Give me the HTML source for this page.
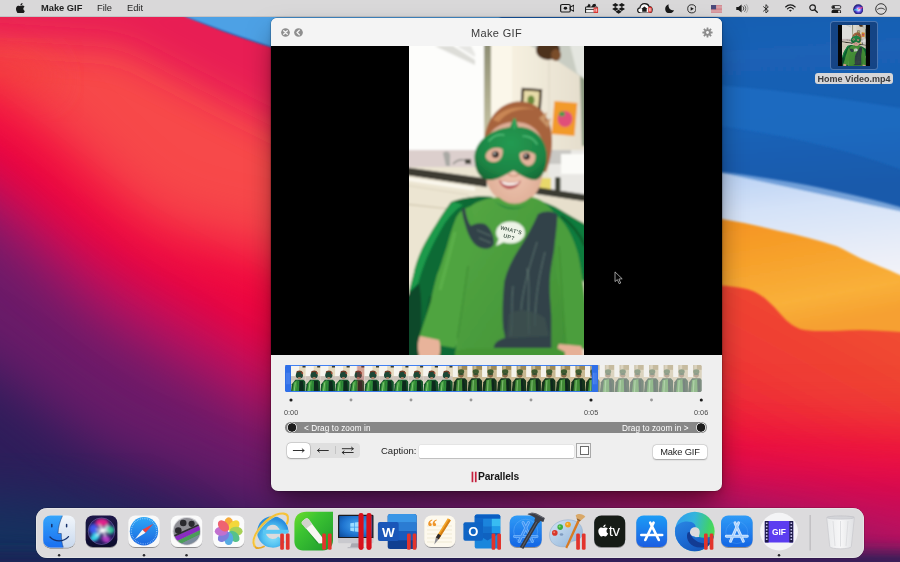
<!DOCTYPE html>
<html lang="en">
<head>
<meta charset="utf-8">
<title>Make GIF</title>
<style>
*{box-sizing:border-box;margin:0;padding:0}
html,body{width:900px;height:562px;overflow:hidden;background:#f2414a}
body{position:relative;font-family:"Liberation Sans",sans-serif;color:#222}
#wall{position:absolute;left:0;top:0;width:900px;height:562px}
#menubar{position:absolute;left:0;top:0;width:900px;height:17px;background:#d9d8d9;border-bottom:1px solid #c3c2c4}
#menubar .mi{position:absolute;top:0;height:17px;line-height:17px;font-size:9.300px;color:#1e1e1e;white-space:nowrap}
#menubar svg{position:absolute}
#win{position:absolute;left:271px;top:18px;width:451px;height:473px;background:#efefef;border-radius:6px 6px 7px 7px;overflow:hidden;box-shadow:0 0 0 0.5px rgba(0,0,0,.28),0 14px 28px -5px rgba(0,0,0,.55),0 1px 5px rgba(0,0,0,.14)}
#titlebar{position:absolute;left:0;top:0;width:451px;height:28px;background:#f4f4f4}
#title{position:absolute;left:0;top:0.500px;width:451px;height:28px;line-height:29px;will-change:transform;text-align:center;font-size:11px;letter-spacing:0.350px;color:#3a3a3a}
#video{position:absolute;left:0;top:27.500px;width:451px;height:309.500px;background:#000}
#dock{position:absolute;left:36px;top:508px;width:828px;height:50px;background:#dcdbdd;border-radius:11px;box-shadow:0 0 0 0.5px rgba(255,255,255,.55) inset,0 0 0 0.5px rgba(0,0,0,.25)}

.tl{position:absolute;top:389.900px;font-size:7.300px;line-height:10px;color:#4a4a4a;white-space:nowrap}
#zbar{position:absolute;left:14px;top:404px;width:421.500px;height:11px;border-radius:5.500px;background:#878787}
#zbar .zk{position:absolute;top:0.300px;width:10.400px;height:10.400px;border-radius:50%;background:radial-gradient(circle closest-side,#1c1c1c 0,#1c1c1c 3.900px,#d6d6d6 4.400px,#d6d6d6 4.900px,rgba(214,214,214,0) 5.200px)}
#zbar .zt{position:absolute;top:0.600px;height:11px;line-height:11.500px;font-size:8.200px;color:#fff;white-space:nowrap;letter-spacing:0.100px}
#seg{position:absolute;left:15.500px;top:424.500px;width:73px;height:15px;border-radius:4px;background:#dfdfdf}
#seg .sel{position:absolute;left:0;top:0;width:23.300px;height:15px;border-radius:4px;background:#fff;box-shadow:0 0 0 0.500px rgba(0,0,0,.18),0 0.500px 1.500px rgba(0,0,0,.25)}
#seg .dv{position:absolute;left:48.700px;top:3.500px;width:0.700px;height:8px;background:#c4c4c4}
#cap{position:absolute;left:109.500px;top:427px;height:12px;line-height:12px;font-size:9.500px;color:#222;white-space:nowrap}
#capin{position:absolute;left:148px;top:426.500px;width:155px;height:13.300px;background:#fff;border-radius:1.500px;box-shadow:0 0 0 0.500px rgba(0,0,0,.08),0 0.700px 0 rgba(0,0,0,.22)}
#swatch{position:absolute;left:305.300px;top:425px;width:15px;height:15px;background:#f6f6f6;border:0.800px solid #a9a9a9}
#swatch span{position:absolute;left:2.300px;top:2.300px;width:9px;height:9px;background:#fff;border:0.900px solid #6a6a6a}
#mkbtn{position:absolute;left:381.500px;top:427.300px;width:54px;height:13.700px;border-radius:3.500px;background:#fff;box-shadow:0 0 0 0.500px rgba(0,0,0,.12),0 0.700px 1.500px rgba(0,0,0,.28);text-align:center}
#mkt{position:absolute;left:0;top:0;width:54px;height:13.700px;font-size:9.300px;line-height:14px;color:#222;white-space:nowrap;letter-spacing:-0.150px}
#plogo{position:absolute;left:207.300px;top:452px;height:13px;line-height:13px;font-size:10.300px;font-weight:bold;letter-spacing:-0.150px;color:#161616;white-space:nowrap}

#dsel{position:absolute;left:829.600px;top:21.400px;width:48.700px;height:48.400px;border-radius:3.500px;background:rgba(20,52,104,.62);border:0.800px solid rgba(120,160,215,.55)}
#dthumb{position:absolute;left:837.700px;top:24.700px;width:32.100px;height:41.300px;background:#050505;overflow:hidden}
#dlabel{position:absolute;left:814.700px;top:72.700px;width:78px;height:11.800px;border-radius:3px;background:#d6d6d8;text-align:center}
#dlt{position:absolute;left:0;top:0;width:78px;height:11.800px;line-height:12px;font-size:9px;font-weight:bold;color:#3a3a3c;white-space:nowrap;letter-spacing:0}
.mi,.tl,.zt,#cap,#mkt,#plogo,#dlt{will-change:transform}
</style>
</head>
<body>
<svg id="wall" viewBox="0 0 900 562">
<!--WALL-START-->
<defs>
<filter id="b30" x="-20%" y="-20%" width="140%" height="140%" color-interpolation-filters="sRGB"><feGaussianBlur stdDeviation="20"/><feGaussianBlur stdDeviation="20"/></filter>
<filter id="b18" x="-20%" y="-20%" width="140%" height="140%"><feGaussianBlur stdDeviation="18"/></filter>
<filter id="b8" x="-20%" y="-20%" width="140%" height="140%"><feGaussianBlur stdDeviation="8"/></filter>
<filter id="b1" x="-5%" y="-5%" width="110%" height="110%"><feGaussianBlur stdDeviation="0.8"/></filter>
<linearGradient id="gBlue" x1="0" y1="0" x2="0.25" y2="1"><stop offset="0" stop-color="#1459ab"/><stop offset="0.42" stop-color="#1a62b6"/><stop offset="0.75" stop-color="#195fb2"/><stop offset="1" stop-color="#154f9c"/></linearGradient>
<linearGradient id="gLight" x1="0" y1="0" x2="0.2" y2="1"><stop offset="0" stop-color="#a9c8f2"/><stop offset="0.45" stop-color="#d4e2f8"/><stop offset="1" stop-color="#f3f3f8"/></linearGradient>
<linearGradient id="gOrange" x1="0" y1="0" x2="0.350" y2="1"><stop offset="0" stop-color="#f38d1e"/><stop offset="0.450" stop-color="#f7a02a"/><stop offset="0.800" stop-color="#f9b03a"/><stop offset="1" stop-color="#f6a030"/></linearGradient>
<linearGradient id="gRedR" x1="1" y1="0" x2="0.300" y2="1"><stop offset="0" stop-color="#f3622e"/><stop offset="0.350" stop-color="#f04a30"/><stop offset="0.700" stop-color="#ef3a35"/><stop offset="1" stop-color="#f0243a"/></linearGradient>
</defs>
<rect width="900" height="562" fill="#f7494a"/>
<!-- rose streak top-left -->
<path d="M-60,-20 L320,-20 L320,150 L230,105 L120,48 L-60,36Z" fill="#e81c54" filter="url(#b18)" opacity="0.950"/>
<path d="M-60,50 L40,50 L60,90 L-60,110Z" fill="#f4443e" filter="url(#b18)" opacity="0.700"/>
<!-- right side red-orange -->
<path d="M700,270 L950,270 L950,460 L700,460Z" fill="url(#gRedR)" filter="url(#b8)"/>
<!-- red band -->
<path d="M-120,40 L0,98 L50,132 L100,182 L150,224 L200,240 L271,254 L520,410 L740,438 L1000,440 L1000,800 L-120,800Z" fill="#f0043e" filter="url(#b30)"/>
<!-- magenta -->
<path d="M-120,100 L0,185 L100,262 L271,358 L520,455 L1000,498 L1000,800 L-120,800Z" fill="#bd1160" filter="url(#b30)"/>
<!-- purple -->
<path d="M-120,140 L0,228 L100,318 L271,420 L560,490 L800,535 L1000,600 L1000,800 L-120,800Z" fill="#6a1b69" filter="url(#b30)"/>
<!-- indigo -->
<path d="M-120,300 L0,375 L100,450 L271,515 L500,560 L700,800 L-120,800Z" fill="#2d1d5a" filter="url(#b30)"/>
<ellipse cx="-30" cy="600" rx="230" ry="105" fill="#14325f" filter="url(#b30)"/>
<path d="M-80,552 L980,552 L980,700 L-80,700Z" fill="#1b2454" filter="url(#b8)" opacity="0.85"/>
<!-- orange band -->
<path d="M700,200 L950,240 L950,332 L900,332 C886,331 872,330 860,330 C846,330.500 832,331 820,331 C812,331 806,330.500 800,329 C794,326.500 790,323.500 786,320 C780,314 776,308 770,303 C764,297 758,292.500 750,290 C742,287.500 732,286 700,284Z" fill="url(#gOrange)" filter="url(#b1)"/>
<!-- light band -->
<path d="M700,150 L950,190 L950,292 L900,275 C893,272 887,269 880,266.500 C873,263.500 867,261 860,258 C852,254 845,250 837,246.300 C818,240 798,235 778,230.700 C760,226 740,222 722,219 L700,216Z" fill="url(#gLight)" filter="url(#b1)"/>
<!-- blue -->
<path d="M150,-5 L188,17 C215,29 245,39 271,47 L722,172 C740,174 760,177 778,180 C798,183 818,187 837,191.500 C858,196 880,201 900,207 L950,222 L950,-5Z" fill="url(#gBlue)" filter="url(#b1)"/>
<path d="M150,-5 L186.500,17 C215,28 245,38 271,46.500 L500,110 L500,-5Z" fill="#4ea1e5" filter="url(#b1)"/>
<path d="M700,84 C760,88 830,96 950,116 L950,190 C860,150 780,134 700,124Z" fill="#2473cb" opacity="0.55" filter="url(#b1)"/>
<path d="M700,124 C780,134 860,150 950,190 L950,222 L700,168Z" fill="#1b65bb" opacity="0.5" filter="url(#b1)"/>
<!--WALL-END-->
</svg>
<div id="menubar">
<!--MENU-START-->
<svg style="left:14.600px;top:2.600px" width="10.800" height="10.800" viewBox="0 0 24 24"><path fill="#1a1a1a" d="M12.152 6.896c-.948 0-2.415-1.078-3.960-1.040-2.040.027-3.910 1.183-4.961 3.014-2.117 3.675-.546 9.103 1.519 12.090 1.013 1.454 2.208 3.090 3.792 3.039 1.520-.065 2.090-.987 3.935-.987 1.831 0 2.350.987 3.960.948 1.637-.026 2.676-1.480 3.676-2.948 1.156-1.688 1.636-3.325 1.662-3.415-.039-.013-3.182-1.221-3.220-4.857-.026-3.040 2.480-4.494 2.597-4.559-1.429-2.090-3.623-2.324-4.390-2.376-2-.156-3.675 1.090-4.610 1.090zM15.530 3.830c.843-1.012 1.400-2.427 1.245-3.830-1.207.052-2.662.805-3.532 1.818-.780.896-1.454 2.338-1.273 3.714 1.338.104 2.715-.688 3.559-1.701"/></svg>
<span class="mi" id="m1" style="left:40.500px;font-weight:bold">Make GIF</span>
<span class="mi" id="m2" style="left:97px">File</span>
<span class="mi" id="m3" style="left:126.500px">Edit</span>
<!-- camera -->
<svg style="left:559.700px;top:4px" width="14.500" height="8.600" viewBox="0 0 16 11" preserveAspectRatio="none"><rect x="0.700" y="0.700" width="10.600" height="9.600" rx="1.800" fill="none" stroke="#1a1a1a" stroke-width="1.300"/><path d="M11.300,4 L15.300,1.600 L15.300,9.400 L11.300,7Z" fill="none" stroke="#1a1a1a" stroke-width="1.200" stroke-linejoin="round"/><circle cx="6" cy="5.500" r="1.900" fill="#1a1a1a"/></svg>
<!-- toolbox -->
<svg style="left:585.400px;top:2.600px" width="14" height="10.400" viewBox="0 0 15 13" preserveAspectRatio="none"><rect x="0.600" y="5" width="12.500" height="7.400" rx="0.800" fill="#f4f4f4" stroke="#1a1a1a" stroke-width="1.100"/><path d="M1,8 H13" stroke="#1a1a1a" stroke-width="1"/><path d="M2,5 L4,1 L6,2.500 L5,5Z M7,5 L8.500,1.500 L11,0.800 L12,3 L10,5Z" fill="#1a1a1a"/><rect x="9.200" y="5.500" width="4.800" height="7" rx="0.800" fill="#e0322e"/><path d="M10.700,7 V11 M12.500,7 V11" stroke="#fff" stroke-width="0.900"/></svg>
<!-- dropbox -->
<svg style="left:612.300px;top:2.800px" width="13.200" height="11" viewBox="0 0 14 12"><path fill="#1a1a1a" d="M3.500,0 L7,2.200 L3.500,4.400 L0,2.200Z M10.500,0 L14,2.200 L10.500,4.400 L7,2.200Z M3.500,4.400 L7,6.600 L3.500,8.800 L0,6.600Z M10.500,4.400 L14,6.600 L10.500,8.800 L7,6.600Z M3.500,9.600 L7,7.400 L10.500,9.600 L7,11.800Z"/></svg>
<!-- cloud home -->
<svg style="left:637.200px;top:2.900px" width="15.800" height="10.600" viewBox="0 0 17 13" preserveAspectRatio="none"><path d="M4,12.200 C1.800,12.200 0.700,10.600 0.700,9 C0.700,7.400 1.800,6.200 3.200,6 C3.200,3 5.400,0.800 8.200,0.800 C10.600,0.800 12.400,2.300 13,4.400 C14.900,4.600 16.300,6.200 16.300,8.200 C16.300,10.500 14.600,12.200 12.500,12.200Z" fill="#fafafa" stroke="#1a1a1a" stroke-width="1.300"/><path d="M4.600,7.400 L8,4.200 L11.400,7.400 L10.400,7.400 L10.400,10.600 L5.600,10.600 L5.600,7.400Z" fill="#1a1a1a"/><rect x="12" y="4.600" width="4" height="7.400" rx="1.200" fill="#e0322e"/><path d="M13.300,6.200 V10.400 M14.800,6.200 V10.400" stroke="#fff" stroke-width="0.800"/></svg>
<!-- moon -->
<svg style="left:664.700px;top:3.900px" width="9.600" height="9.600" viewBox="0 0 11 11"><path d="M4.200,0.300 C3.400,3.800 5.800,7.400 10.300,7.200 C9.300,9.400 7.400,10.700 5.200,10.700 C2.300,10.700 0.200,8.500 0.200,5.700 C0.200,3.100 1.900,0.900 4.200,0.300Z" fill="#1a1a1a"/></svg>
<!-- play circle -->
<svg style="left:686.900px;top:4.300px" width="9.600" height="9.600" viewBox="0 0 11 11"><circle cx="5.500" cy="5.500" r="4.700" fill="none" stroke="#1a1a1a" stroke-width="1"/><path d="M4.200,3.300 L7.800,5.500 L4.200,7.700Z" fill="#1a1a1a"/></svg>
<!-- flag -->
<svg style="left:710.800px;top:4.600px" width="11.300" height="8.500" viewBox="0 0 12 9"><rect width="12" height="9" rx="1" fill="#e8dede"/><path d="M0,0.700 H12 M0,2.100 H12 M0,3.500 H12 M0,4.900 H12 M0,6.300 H12 M0,7.700 H12" stroke="#c8505c" stroke-width="0.750"/><rect width="5.400" height="4.600" fill="#4a4a7c"/></svg>
<!-- speaker -->
<svg style="left:736.200px;top:4.300px" width="12.700" height="9" viewBox="0 0 14 11" preserveAspectRatio="none"><path d="M0.300,3.600 H2.600 L6.200,0.600 V10.400 L2.600,7.400 H0.300Z" fill="#1a1a1a"/><path d="M7.800,3.300 C8.800,4.500 8.800,6.500 7.800,7.700" fill="none" stroke="#1a1a1a" stroke-width="1" stroke-linecap="round"/><path d="M9.600,1.900 C11.300,3.900 11.300,7.100 9.600,9.100" fill="none" stroke="#555" stroke-width="1" stroke-linecap="round"/><path d="M11.400,0.600 C13.700,3.400 13.700,7.600 11.400,10.400" fill="none" stroke="#999" stroke-width="1" stroke-linecap="round"/></svg>
<!-- bluetooth -->
<svg style="left:763px;top:3.700px" width="6.200" height="9.800" viewBox="0 0 7 12" preserveAspectRatio="none"><path d="M0.600,3.300 L6,8.400 L3.300,11.200 V0.800 L6,3.600 L0.600,8.700" fill="none" stroke="#1a1a1a" stroke-width="1" stroke-linejoin="round" stroke-linecap="round"/></svg>
<!-- wifi -->
<svg style="left:785.300px;top:4.200px" width="10.800" height="8.200" viewBox="0 0 13 10"><path d="M0.700,3.600 C4,0.400 9,0.400 12.300,3.600" fill="none" stroke="#1a1a1a" stroke-width="1.500" stroke-linecap="round"/><path d="M2.900,5.900 C5,3.900 8,3.900 10.100,5.900" fill="none" stroke="#1a1a1a" stroke-width="1.500" stroke-linecap="round"/><path d="M6.500,9.600 L4.700,7.700 C5.700,6.800 7.300,6.800 8.300,7.700Z" fill="#1a1a1a"/></svg>
<!-- search -->
<svg style="left:809.200px;top:4.300px" width="9" height="9" viewBox="0 0 10 10"><circle cx="4" cy="4" r="3.100" fill="none" stroke="#1a1a1a" stroke-width="1.300"/><path d="M6.300,6.300 L9.200,9.200" stroke="#1a1a1a" stroke-width="1.500" stroke-linecap="round"/></svg>
<!-- control center -->
<svg style="left:831.400px;top:4.700px" width="10.600" height="8.800" viewBox="0 0 12 10"><rect x="0.900" y="0.600" width="10.200" height="3.700" rx="1.850" fill="none" stroke="#1a1a1a" stroke-width="0.900"/><circle cx="2.900" cy="2.450" r="1.500" fill="#1a1a1a"/><rect x="0.500" y="5.500" width="11" height="4.200" rx="2.100" fill="#1a1a1a"/><circle cx="9.200" cy="7.600" r="1.300" fill="#d9d8d9"/></svg>
<!-- siri -->
<svg style="left:852.700px;top:3.700px" width="10.600" height="10.600" viewBox="0 0 11 11"><defs><radialGradient id="siriM" cx="0.520" cy="0.520" r="0.560"><stop offset="0" stop-color="#ffffff"/><stop offset="0.220" stop-color="#d9d0ff"/><stop offset="0.450" stop-color="#6a5ae8"/><stop offset="0.750" stop-color="#2c2490"/><stop offset="1" stop-color="#1c1c58"/></radialGradient></defs><circle cx="5.500" cy="5.500" r="5.300" fill="url(#siriM)"/><path d="M1.300,6.800 C2.500,4.500 4,7.500 5.500,5.500" stroke="#3ad8f0" stroke-width="1.300" fill="none" opacity="0.750"/><path d="M5.500,5.500 C7,3.300 8.500,5.500 9.800,3.300" stroke="#ff4a8a" stroke-width="1.300" fill="none" opacity="0.800"/></svg>
<!-- user circle -->
<svg style="left:875px;top:2.500px" width="12" height="12" viewBox="0 0 12 12"><circle cx="6" cy="6" r="5.300" fill="none" stroke="#1a1a1a" stroke-width="0.850"/><path d="M2.500,6.300 C4.300,4.700 7.700,4.700 9.500,6.300" fill="none" stroke="#1a1a1a" stroke-width="0.750" stroke-linecap="round"/></svg>
<!--MENU-END-->
</div>
<!--DESK-START-->
<div id="dsel"></div>
<div id="dthumb"><svg style="position:absolute;left:4.300px;top:0" width="23.800" height="41.300" viewBox="0 0 175 309" preserveAspectRatio="none"><use href="#photoG"/><rect width="175" height="309" fill="#000" opacity="0.120"/></svg></div>
<div id="dlabel"><span id="dlt">Home Video.mp4</span></div>
<!--DESK-END-->
<div id="win">
<div id="titlebar"></div>
<div id="title">Make GIF</div>
<div id="video"><!--VIDEO-START-->
<svg id="photo" style="position:absolute;left:138px;top:0;will-change:transform" width="175" height="309" viewBox="0 0 175 309">
<defs>
<filter id="pb" x="-5%" y="-5%" width="110%" height="110%"><feGaussianBlur stdDeviation="1"/></filter>
<filter id="pb2" x="-10%" y="-10%" width="120%" height="120%"><feGaussianBlur stdDeviation="2"/></filter>
<linearGradient id="cab" x1="0" y1="0" x2="1" y2="0"><stop offset="0" stop-color="#f6f0e0"/><stop offset="1" stop-color="#e3dccb"/></linearGradient>
<linearGradient id="shirt" x1="0" y1="0" x2="1" y2="1"><stop offset="0" stop-color="#55a844"/><stop offset="0.5" stop-color="#4a9c3c"/><stop offset="1" stop-color="#429036"/></linearGradient>
<linearGradient id="capeL" x1="1" y1="0" x2="0" y2="1"><stop offset="0" stop-color="#128a43"/><stop offset="0.5" stop-color="#0c7237"/><stop offset="1" stop-color="#09572a"/></linearGradient>
<radialGradient id="face" cx="0.5" cy="0.55" r="0.6"><stop offset="0" stop-color="#f0c8b4"/><stop offset="1" stop-color="#dcaa92"/></radialGradient>
<radialGradient id="mask" cx="0.5" cy="0.4" r="0.7"><stop offset="0" stop-color="#259a52"/><stop offset="0.7" stop-color="#1c8444"/><stop offset="1" stop-color="#136634"/></radialGradient>
<linearGradient id="wstrip" x1="0" y1="0" x2="0" y2="1"><stop offset="0" stop-color="#8c8c72"/><stop offset="0.500" stop-color="#b0ae90"/><stop offset="1" stop-color="#d2cfae"/></linearGradient>
<clipPath id="pclip"><rect width="175" height="309"/></clipPath>
</defs>
<g id="photoG" clip-path="url(#pclip)"><g filter="url(#pb)">
<rect x="-5" y="-5" width="185" height="319" fill="#ebe4d1"/>
<!-- window -->
<rect x="-5" y="-5" width="81" height="125" fill="#fdfdfb"/>
<path d="M26,0 L44,0 L66,14 L66,19Z" fill="#d4d4d0" opacity="0.800"/><path d="M48,0 L62,0 L66,8 L66,11Z" fill="#dcdcd8" opacity="0.700"/>
<rect x="-5" y="104" width="80" height="17" fill="#dccfcd"/>
<rect x="75" y="-5" width="7" height="115" fill="url(#wstrip)"/>
<rect x="82" y="-5" width="21" height="120" fill="#fbf7ea"/>
<!-- cabinet -->
<rect x="103" y="-5" width="77" height="110" fill="url(#cab)"/>
<path d="M140,0 L140,104" stroke="#d9d2c0" stroke-width="0.800"/>
<!-- wall top right -->
<path d="M120,-5 L180,-5 L180,36 L150,16 L122,0Z" fill="#c9cdc3"/>
<path d="M160,-5 L180,-5 L180,36 L168,27Z" fill="#e4e6e0"/>
<path d="M171,30 L180,36 L180,100 L173,100Z" fill="#8f9c84"/>
<ellipse cx="139" cy="4" rx="12" ry="10" fill="#4e321f"/>
<ellipse cx="147" cy="9" rx="5" ry="6" fill="#7a4e2c"/>
<!-- pictures -->
<rect x="112" y="42.500" width="20.500" height="21.500" fill="#3b2c1c" transform="rotate(4 122 53)"/>
<rect x="114.500" y="45" width="15.500" height="16.500" fill="#e8dba8" transform="rotate(4 122 53)"/>
<ellipse cx="122" cy="54" rx="3.500" ry="4.500" fill="#6a8a3a"/>
<rect x="144" y="56" width="23" height="33" fill="#f29a2c" transform="rotate(5 155 72)"/>
<ellipse cx="156" cy="73" rx="7.500" ry="8" fill="#e0507a"/>
<ellipse cx="153" cy="68" rx="3" ry="2.500" fill="#4c9a4c"/>
<!-- range hood / right lower -->
<rect x="140" y="104" width="40" height="44" fill="#e9e8e4"/>
<rect x="140" y="104" width="22" height="14" fill="#c9c8c4"/>
<rect x="152" y="108" width="28" height="20" fill="#fbfbf8"/>
<rect x="146" y="131" width="5.500" height="14" rx="1.500" fill="#3c4234"/>
<rect x="128" y="132" width="14" height="14" fill="#e8d86a"/>
<path d="M120,140 L180,149 L180,156 L120,147Z" fill="#3b3a31"/>
<!-- left counter -->
<path d="M34,107 C38,104 42,106 41,112 L41,120 L37,120Z" fill="#a9a9a4"/>
<path d="M44,118 C50,112 58,113 62,118" stroke="#8a8a84" stroke-width="1.500" fill="none"/>
<rect x="56" y="113" width="6" height="5" fill="#4a4a40"/>
<path d="M-5,121 L78,132.500 L78,141.500 L-5,129Z" fill="#3c3a32"/>
<path d="M-5,129 L78,141.500 L78,320 L-5,320Z" fill="#ece5d2"/>
<path d="M-5,132.500 L66,143" stroke="#fbf8ee" stroke-width="3.500"/>
<path d="M-5,158 L50,164" stroke="#cfc6ae" stroke-width="1.200"/><path d="M-5,139 L60,149" stroke="#d8d0ba" stroke-width="0.800"/>
<!-- right lower background -->
<path d="M130,150 L180,156 L180,320 L130,320Z" fill="#e7dfcc"/>
<!-- hair -->
<path d="M76,106 C72,84 84,58 108,55.500 C130,54 144,72 143,96 C143,108 140,118 137,126 L80,124Z" fill="#a7643c"/>
<path d="M84,74 C92,62 112,58 126,64 C116,61 98,64 90,76Z" fill="#c98654"/>
<path d="M130,72 L138,66 L136,76 L142,72 L139,82Z" fill="#c99468"/>
<!-- face -->
<path d="M78,98 C78,84 92,76 106,76 C122,76 134,86 134,102 L133.500,128 C132,145 123,157 106,158.500 C89,157.500 78,145 76.500,128Z" fill="url(#face)"/>
<path d="M72,108 C70,104 75,102 77,106 L78,122 C74,120 72,114 72,108Z" fill="#d99d84"/>
<!-- mask -->
<path d="M65.500,113 C65,96 80,84 101,81 C103,76 104,73 105.500,72.500 C107,73 108,77 109,81 C124,81 136,91 137.700,107 C138.500,120 135,130 128,133.500 C119,135 112,129 104.500,124.500 C97,128 89,134.500 79,134 C70,132.500 66,124 65.500,113Z" fill="url(#mask)"/>
<path d="M80,95 C84,90 90,88 95,89" stroke="#4dbb74" stroke-width="1.600" fill="none" stroke-linecap="round"/>
<path d="M114,90 C120,90 125,93 128,98" stroke="#4dbb74" stroke-width="1.600" fill="none" stroke-linecap="round"/>
<path d="M105.500,73.500 L105.500,82" stroke="#34a85e" stroke-width="2.500" stroke-linecap="round"/>
<!-- eye holes -->
<path d="M76.500,110 C78,103 86,100 93.500,103 C94.500,109 92,115 86,116 C81,116.500 77,114 76.500,110Z" fill="#e3b39b"/>
<path d="M110.500,108 C113,104 122,104.500 126.500,109 C127,115 124,120 119,120 C114,119 110.500,114 110.500,108Z" fill="#e3b39b"/>
<ellipse cx="86.500" cy="108.500" rx="3.400" ry="3.200" fill="#2a2420"/>
<ellipse cx="117.500" cy="110.500" rx="3.400" ry="3.200" fill="#2a2420"/>
<circle cx="85.500" cy="107.500" r="0.900" fill="#fff"/>
<circle cx="116.500" cy="109.500" r="0.900" fill="#fff"/>
<!-- nose & mouth -->
<path d="M99,128 C102,131 107,131 110,128" stroke="#c98a72" stroke-width="1.200" fill="none"/>
<path d="M90,134 C96,137 106,137.500 112,134.500 C110,141 104,143 100,143 C95,142.500 91,139 90,134Z" fill="#b9565a"/>
<path d="M92,135 C97,137 105,137.500 110.500,135.500 C109,138.500 104,139.500 100.500,139.500 C96.500,139.500 93,138 92,135Z" fill="#fbf7f2"/>
<!-- neck shadow -->
<path d="M90,152 C100,160 112,160 122,151 L124,160 L88,160Z" fill="#c98e76"/>
<!-- cape back/right -->
<path d="M118,153 C128,153 140,157 150,163 C160,169 170,175 182,181 L182,244 L150,205 L128,160Z" fill="#0f7c3c"/>
<path d="M152,170 C160,176 170,186 176,200" stroke="#0a5a2c" stroke-width="2.500" fill="none"/>
<!-- cape left -->
<path d="M84,151 C70,149 52,152 42,156 C36,164 32,170 28,177 C22,186 17,195 13,203 C9,212 6,220 4.500,228.500 C3,234 1.500,240 0,246 L-2,320 L50,320 L40,240 L66,168Z" fill="#0b6a34"/>
<path d="M44,155.500 C37,163 32,170 28,177 C22,186 17,195 13,203 C9,212 6,220 4.500,228.500 L0,246 L9,238 C12,227 16,215 21,205 C26,194 31,185 36,177 C41,170 47,163 54,159Z" fill="#1a9a4c"/>
<path d="M-2,250 L10,237 C15,262 10,290 13,320 L-2,320Z" fill="#08482a"/>
<path d="M20,250 C16,272 14,296 16,320 L30,320 C26,296 26,272 28,250Z" fill="#0a5a2e"/>
<!-- shirt torso -->
<path d="M62,160 C70,154 82,151 90,151.500 C100,160 112,160 122,151 C132,152 141,160 147,170 L158,206 L158,320 L46,320 L50,240 L56,190Z" fill="url(#shirt)"/>
<!-- sleeves -->
<path d="M62,160 C54,163 50,166 47,172 C43,182 40,192 38,200 C34,212 31,222 28,229 C25,240 23,248 22,255 C18,268 14,280 10.700,289 L10,296 L46,302 C48,296 48.500,292 48.500,289 C52,264 56,240 59,220 L68,186Z" fill="#50a440"/>
<path d="M59,220 C56,244 52,270 48.500,292" stroke="#3c8a30" stroke-width="1.500" fill="none" opacity="0.700"/>
<path d="M46,186 C42,204 36,224 31,244" stroke="#6cc458" stroke-width="3" fill="none" opacity="0.400"/>
<path d="M145,167 C156,175 164,190 169,208 C174,232 178,262 180,290 L180,304 L156,300 C155,276 152,250 148,226Z" fill="#4c9e3c"/>
<path d="M150,200 C152,230 154,270 157,300" stroke="#3c8a30" stroke-width="1.500" fill="none" opacity="0.700"/>
<!-- collar -->
<path d="M82,151 C92,165 118,166 127,151 C122,159 112,163 104,163 C96,163 88,159 82,151Z" fill="#0f7c3c"/>
<!-- dino print -->
<path d="M129,168 C136,164 146,165 148.500,169 C148,182 146,194 145,204.500 C143,216 141,226 140.800,235 C140,250 143,266 142.300,280 L142.300,302 C128,306 104,306 85,304 C84,298 88,294 96,292 C96,288 94,284 94,280 C93,264 94,248 95.400,235 C98,224 103,214 109,204.500 C117,192 124,180 129,168Z" fill="#33434a"/>
<path d="M128,196 C122,216 114,240 112,264 M136,206 C130,230 126,252 126,280 M118,222 C122,240 118,262 120,288 M104,240 C102,256 104,272 102,290" stroke="#789486" stroke-width="0.700" fill="none" opacity="0.800"/>
<path d="M100,268 C110,262 124,264 136,272 L140,290 L98,292Z" fill="#3e5250" opacity="0.700"/>
<path d="M56,162 C57,170 59,176 62,180 C64,178 70,176 76,178 C82,182 86,192 85,198 C82,204 74,204 68,200 C62,196 58,186 56,178 C54,172 53,166 53,163Z" fill="#33434a"/>
<path d="M68,184 L82,190 M70,192 L82,197" stroke="#789486" stroke-width="0.600"/>
<!-- speech bubble -->
<ellipse cx="101.500" cy="186.500" rx="14.400" ry="11" fill="#eef4e8"/>
<path d="M90,192 L87,200 L96,195.500Z" fill="#eef4e8"/>
<!-- hands -->
<path d="M11,290 C8,296 8,306 12,316 L28,316 C32,308 32,300 30,294Z" fill="#e8b39a"/>
<path d="M150,298 C147,304 147,312 150,318 L172,318 C174,310 174,304 172,300Z" fill="#e6b096"/>
<!-- hem -->
<path d="M46,305 L60,302 L148,302 L156,306 L156,320 L46,320Z" fill="#459636"/>
</g>
<text x="102" y="186" text-anchor="middle" font-family="'Liberation Sans',sans-serif" font-weight="bold" font-size="5.400" letter-spacing="0.250" fill="#4c6052" transform="rotate(14 102 184.500)">WHAT'S</text>
<text x="100" y="192.800" text-anchor="middle" font-family="'Liberation Sans',sans-serif" font-weight="bold" font-size="5.400" letter-spacing="0.250" fill="#4c6052" transform="rotate(14 100 191)">UP?</text>
</g>
</svg>
<!--VIDEO-END--></div>
<!--CONTROLS-START-->
<svg style="position:absolute;left:10.400px;top:10px" width="9" height="9" viewBox="0 0 9 9"><circle cx="4.500" cy="4.500" r="4.350" fill="#8f8f8f"/><path d="M2.700,2.700 L6.300,6.300 M6.300,2.700 L2.700,6.300" stroke="#f4f4f4" stroke-width="1.300" stroke-linecap="round"/></svg>
<svg style="position:absolute;left:22.700px;top:10px" width="9" height="9" viewBox="0 0 9 9"><circle cx="4.500" cy="4.500" r="4.350" fill="#8f8f8f"/><path d="M5.300,2.300 L3,4.500 L5.300,6.700" stroke="#f4f4f4" stroke-width="1.300" fill="none" stroke-linecap="round" stroke-linejoin="round"/></svg>
<svg style="position:absolute;left:430.500px;top:9px" width="11" height="11" viewBox="-5.500 -5.500 11 11"><g fill="#8c8c8c"><circle r="3.300"/><g id="tooth"><rect x="-0.900" y="-5.100" width="1.800" height="2.600" rx="0.300"/></g><use href="#tooth" transform="rotate(45)"/><use href="#tooth" transform="rotate(90)"/><use href="#tooth" transform="rotate(135)"/><use href="#tooth" transform="rotate(180)"/><use href="#tooth" transform="rotate(225)"/><use href="#tooth" transform="rotate(270)"/><use href="#tooth" transform="rotate(315)"/></g><circle r="1.400" fill="#f4f4f4"/></svg>
<!-- filmstrip -->
<svg id="film" style="position:absolute;left:14px;top:347px" width="417" height="27" viewBox="0 0 417 28" preserveAspectRatio="none">
<defs>
<filter id="fb" x="-5%" y="-10%" width="110%" height="120%"><feGaussianBlur stdDeviation="0.600"/></filter>
<g id="frA"><rect width="14.800" height="28" fill="#f6f4ee"/><rect x="8" y="0" width="6.800" height="13" fill="#e6dcc2"/><rect x="11.500" y="0" width="3.300" height="2.600" fill="#3c3c2c"/><rect x="0" y="11.500" width="14.800" height="5" fill="#cdc4ba"/><rect x="0" y="16" width="14.800" height="12" fill="#d9d1c2"/><ellipse cx="8.400" cy="7.700" rx="3" ry="1.900" fill="#6e3c28"/><ellipse cx="8.400" cy="10.600" rx="3.600" ry="3.300" fill="#1a4636"/><ellipse cx="11.300" cy="8.500" rx="0.900" ry="1.200" fill="#a0503a"/><ellipse cx="8.400" cy="13.600" rx="1.700" ry="1.100" fill="#b4866c"/><path d="M4.400,15.300 L12.400,15.300 L14.800,17.500 L14.800,28 L0,28 L0.800,20Z" fill="#14522c"/><path d="M2.800,18 L6.600,15.600 L5.600,28 L1.200,28Z" fill="#3f9a3c"/><path d="M3.800,18.500 L4.800,17.800 L3.600,28 L2.600,28Z" fill="#80c878"/><path d="M8.300,16.500 L12,16.500 L12.800,28 L8,28Z" fill="#0e2a1c"/><path d="M6.600,16 L8.300,16.500 L8,28 L5.600,28Z" fill="#2f8a38"/></g>
<g id="frA2"><use href="#frA"/><rect x="7" width="7.800" height="28" fill="#b0303c" opacity="0.300"/></g>
<g id="frB"><rect width="14.800" height="28" fill="#c8b890"/><rect x="0" width="5.200" height="12.500" fill="#f4f2ea"/><rect x="5.200" y="0" width="1.300" height="12" fill="#b0a078"/><rect x="9" y="0" width="5.800" height="5" fill="#a08a54"/><rect x="0" y="12.500" width="14.800" height="3.500" fill="#cdbc98"/><ellipse cx="8.400" cy="7" rx="3.100" ry="2.500" fill="#3e5a2e"/><ellipse cx="8.400" cy="10.600" rx="2.500" ry="2.500" fill="#8a6a48"/><ellipse cx="8.400" cy="9.400" rx="2.700" ry="1.100" fill="#2f4f2e"/><path d="M4.200,13.800 L12.400,13.800 L14.800,16.500 L14.800,28 L0.200,28 L1.200,18Z" fill="#15361e"/><path d="M4.200,15.500 L9.600,14.400 L10,28 L3,28Z" fill="#3f8a36"/><path d="M5.400,16 L6.600,15.600 L6,28 L4.800,28Z" fill="#78b86a"/><path d="M9.400,15 L11.600,15 L12.400,28 L9.800,28Z" fill="#10281a"/></g>
<clipPath id="fclip"><rect x="0" y="0" width="416.500" height="28" rx="1.500"/></clipPath>
</defs>
<g clip-path="url(#fclip)"><g filter="url(#fb)">
<rect width="417" height="28" fill="#ece6d6"/><use href="#frA" x="6.0"/><use href="#frA" x="20.7"/><use href="#frA" x="35.4"/><use href="#frA" x="50.1"/><use href="#frA2" x="64.8"/><use href="#frA" x="79.5"/><use href="#frA" x="94.2"/><use href="#frA" x="108.9"/><use href="#frA" x="123.6"/><use href="#frA" x="138.3"/><use href="#frA" x="153.0"/><use href="#frB" x="167.7"/><use href="#frB" x="182.4"/><use href="#frB" x="197.1"/><use href="#frB" x="211.8"/><use href="#frB" x="226.5"/><use href="#frB" x="241.2"/><use href="#frB" x="255.9"/><use href="#frB" x="270.6"/><use href="#frB" x="285.3"/><use href="#frB" x="300.0"/><use href="#frB" x="314.7"/><use href="#frB" x="329.4"/><use href="#frB" x="344.1"/><use href="#frB" x="358.8"/><use href="#frB" x="373.5"/><use href="#frB" x="388.2"/><use href="#frB" x="402.9"/>
</g>
<rect x="313" y="0" width="104" height="28" fill="#f0f0f0" opacity="0.480"/>
<rect x="0" y="0" width="313" height="1" fill="#3b7df2"/><rect x="0" y="27" width="313" height="1" fill="#3b7df2"/>
<rect x="0" y="0" width="6" height="28" rx="1.500" fill="#2f6fe8"/>
<rect x="306.700" y="0" width="6.300" height="28" rx="1.500" fill="#2f6fe8"/>
<path d="M1.800,8 V20 M3,8 V20 M4.200,8 V20 M308.500,8 V20 M309.800,8 V20 M311.100,8 V20" stroke="#6b9bf5" stroke-width="0.500"/>
</g>
</svg>
<!-- ticks -->
<svg style="position:absolute;left:0;top:378px" width="451" height="8" viewBox="0 0 451 8"><g fill="#989898"><circle cx="80" cy="4" r="1.450"/><circle cx="140" cy="4" r="1.450"/><circle cx="200" cy="4" r="1.450"/><circle cx="260" cy="4" r="1.450"/><circle cx="380.500" cy="4" r="1.450"/></g><g fill="#1c1c1c"><circle cx="20" cy="4" r="1.550"/><circle cx="320" cy="4" r="1.550"/><circle cx="430.300" cy="4" r="1.550"/></g></svg>
<span class="tl" id="t0" style="left:13px">0:00</span>
<span class="tl" id="t5" style="left:313px">0:05</span>
<span class="tl" id="t6" style="left:423px">0:06</span>
<!-- zoom bar -->
<div id="zbar"><span class="zk" style="left:1.800px"></span><span class="zk" style="right:0.300px"></span><span class="zt" id="zl" style="left:19px">&lt; Drag to zoom in</span><span class="zt" id="zr" style="right:18px">Drag to zoom in &gt;</span></div>
<!-- segmented -->
<div id="seg"><span class="sel"></span><span class="dv"></span>
<svg style="position:absolute;left:0;top:0" width="73" height="15" viewBox="0 0 73 15"><g stroke="#262626" stroke-width="0.950" fill="none" stroke-linecap="round" stroke-linejoin="round"><path d="M6.300,7.500 H17 M15.200,5.900 L17.100,7.500 L15.200,9.100"/><path d="M41.300,7.500 H30.600 M32.400,5.900 L30.500,7.500 L32.400,9.100"/><path d="M55.300,5.700 H66.200 M64.500,4.200 L66.300,5.700 L64.500,7.200"/><path d="M66.200,9.500 H55.300 M57,8 L55.200,9.500 L57,11"/></g></svg></div>
<span id="cap">Caption:</span>
<div id="capin"></div>
<div id="swatch"><span></span></div>
<div id="mkbtn"><span id="mkt">Make GIF</span></div>
<svg style="position:absolute;left:199.500px;top:452.500px" width="6" height="12" viewBox="0 0 6 12"><rect x="0.600" y="0.700" width="1.700" height="10.500" fill="#c41f3c"/><rect x="3.900" y="0.700" width="1.700" height="10.500" fill="#c41f3c"/></svg>
<span id="plogo">Parallels</span>
<!--CONTROLS-END-->
</div>
<svg id="cursor" style="position:absolute;left:613px;top:270px" width="12" height="16" viewBox="613 270 12 16"><path d="M615,271.900 L615,281.600 L617.300,279.600 L619.200,283.700 L620.700,283 L618.900,279 L622.200,278.800Z" fill="#060606" stroke="#c8c8c8" stroke-width="0.750" stroke-linejoin="round"/></svg>
<div id="dock">
<!--DOCK-START-->
<svg id="dockicons" style="position:absolute;left:0;top:0;will-change:transform" width="828" height="50" viewBox="36 508 828 50">
<defs>
<linearGradient id="gFinL" x1="0" y1="0" x2="0" y2="1"><stop offset="0" stop-color="#35a5fb"/><stop offset="1" stop-color="#1b6ff0"/></linearGradient>
<linearGradient id="gFinR" x1="0" y1="0" x2="0" y2="1"><stop offset="0" stop-color="#f2f6fb"/><stop offset="1" stop-color="#c9d9ee"/></linearGradient>
<radialGradient id="gSiri" cx="0.5" cy="0.5" r="0.5"><stop offset="0" stop-color="#ffffff"/><stop offset="0.180" stop-color="#b9f0ff"/><stop offset="0.450" stop-color="#8a4ad8"/><stop offset="0.750" stop-color="#c2307c"/><stop offset="1" stop-color="#35246e"/></radialGradient>
<linearGradient id="gSaf" x1="0" y1="0" x2="0" y2="1"><stop offset="0" stop-color="#2ea8f6"/><stop offset="1" stop-color="#1b66e0"/></linearGradient>
<linearGradient id="gAS" x1="0" y1="0" x2="0" y2="1"><stop offset="0" stop-color="#1d9cf6"/><stop offset="1" stop-color="#1a5ee2"/></linearGradient>
<linearGradient id="gXc" x1="0" y1="0" x2="0" y2="1"><stop offset="0" stop-color="#2f9bf6"/><stop offset="1" stop-color="#1566e4"/></linearGradient>
<linearGradient id="gGreen" x1="0" y1="0" x2="1" y2="1"><stop offset="0" stop-color="#3fd23a"/><stop offset="1" stop-color="#18a42c"/></linearGradient>
<linearGradient id="gScr" x1="0" y1="0" x2="1" y2="1"><stop offset="0" stop-color="#2a8ae0"/><stop offset="1" stop-color="#0c4aa0"/></linearGradient>
<linearGradient id="gTrash" x1="0" y1="0" x2="1" y2="0"><stop offset="0" stop-color="#e9eaec"/><stop offset="0.5" stop-color="#f7f7f8"/><stop offset="1" stop-color="#dfe0e3"/></linearGradient>
<linearGradient id="gEdge" x1="0" y1="0" x2="1" y2="1"><stop offset="0" stop-color="#2a9ae0"/><stop offset="1" stop-color="#0c4a9c"/></linearGradient>
<linearGradient id="gEdge2" x1="0" y1="1" x2="1" y2="0"><stop offset="0" stop-color="#2aa8e0"/><stop offset="0.600" stop-color="#36c88c"/><stop offset="1" stop-color="#5ad84a"/></linearGradient>
<g id="pbars"><rect x="0" y="0" width="3.700" height="16.400" rx="1.300" fill="#e2342c"/><rect x="5.700" y="0" width="3.700" height="16.400" rx="1.300" fill="#e2342c"/></g>
<filter id="ds" x="-10%" y="-10%" width="120%" height="130%"><feGaussianBlur in="SourceAlpha" stdDeviation="0.600"/><feOffset dy="0.500"/><feComponentTransfer><feFuncA type="linear" slope="0.350"/></feComponentTransfer><feMerge><feMergeNode/><feMergeNode in="SourceGraphic"/></feMerge></filter>
</defs>
<!-- 1 Finder -->
<g filter="url(#ds)"><rect x="43.200" y="515.400" width="32" height="32" rx="7.200" fill="url(#gFinR)"/>
<path d="M50.400,515.400 H62.500 C60,521 58.200,527 58,533.500 H61.300 C61.300,539 62,544 63.300,547.400 H50.400 A7.200,7.200 0 0 1 43.200,540.200 V522.600 A7.200,7.200 0 0 1 50.400,515.400Z" fill="url(#gFinL)"/></g>
<path d="M51.800,524.400 V526.800 M66.600,524.400 V526.800" stroke="#15306a" stroke-width="1.500" stroke-linecap="round"/>
<path d="M50,537 C55,542.300 63.500,542.300 68.500,536.600" stroke="#15306a" stroke-width="1.300" fill="none" stroke-linecap="round"/>
<path d="M62.500,515.800 C60,521 58.200,527 58,533.500 H61.300 C61.300,539 62,544 63.300,547.200" stroke="#15306a" stroke-width="0.700" fill="none" opacity="0.700"/>
<!-- 2 Siri -->
<defs><filter id="sb" x="-50%" y="-50%" width="200%" height="200%"><feGaussianBlur stdDeviation="1.600"/></filter><clipPath id="sclip"><circle cx="101.500" cy="531.200" r="13.300"/></clipPath><linearGradient id="gSiriBg" x1="0" y1="0" x2="0" y2="1"><stop offset="0" stop-color="#1d1848"/><stop offset="1" stop-color="#0e0d2c"/></linearGradient></defs>
<g filter="url(#ds)"><rect x="85.700" y="515.400" width="31.600" height="31.600" rx="7.200" fill="url(#gSiriBg)"/></g>
<circle cx="101.500" cy="531.200" r="13.600" fill="#241a5c"/>
<g clip-path="url(#sclip)"><g filter="url(#sb)">
<ellipse cx="102" cy="522.500" rx="6.500" ry="4" fill="#e0208c"/>
<ellipse cx="93.500" cy="529" rx="4.500" ry="5" fill="#3c58ee"/>
<ellipse cx="95" cy="537" rx="5.500" ry="3.600" fill="#30d2e8" transform="rotate(-35 95 537)"/>
<ellipse cx="110" cy="530" rx="4.500" ry="4" fill="#2fc49c"/>
<ellipse cx="106" cy="539" rx="4.500" ry="3.500" fill="#b23cc4" transform="rotate(30 106 539)"/>
<ellipse cx="102.500" cy="530.500" rx="9" ry="1.300" fill="#eafcff" transform="rotate(-40 102.500 530.500)"/>
<ellipse cx="102.500" cy="530.500" rx="7" ry="1.100" fill="#ffffff" transform="rotate(60 102.500 530.500)"/>
<ellipse cx="102.500" cy="530.500" rx="7" ry="1" fill="#ffffff" transform="rotate(10 102.500 530.500)"/>
<circle cx="102.500" cy="530.500" r="2.400" fill="#ffffff"/>
</g></g>
<circle cx="101.500" cy="531.200" r="13.300" fill="none" stroke="#8a80b8" stroke-width="0.600" opacity="0.700"/>
<!-- 3 Safari -->
<g filter="url(#ds)"><rect x="128.200" y="515.400" width="31.600" height="31.600" rx="7.200" fill="#f8f8f8"/></g>
<circle cx="144" cy="531.200" r="14.200" fill="url(#gSaf)"/>
<circle cx="144" cy="531.200" r="12.700" fill="none" stroke="#bfe0ff" stroke-width="1.300" stroke-dasharray="0.500 1.300" opacity="0.900"/>
<path d="M153.400,523.700 L145.500,532.800 L142.400,529.800Z" fill="#f0413c"/>
<path d="M135,539.200 L145.500,532.800 L142.400,529.800Z" fill="#f6f6f6"/>
<!-- 4 movie reel -->
<g filter="url(#ds)"><rect x="170.700" y="515.400" width="31.600" height="31.600" rx="7.200" fill="#fafafa"/></g>
<defs><clipPath id="rclip"><circle cx="186.800" cy="531.200" r="13.200"/></clipPath></defs>
<circle cx="186.800" cy="531.200" r="14.200" fill="#d4d4d8"/>
<circle cx="186.800" cy="531.200" r="13.200" fill="#8e8e94"/>
<g clip-path="url(#rclip)">
<path d="M174,537 L200.500,525 L201.500,529.500 L175,542Z" fill="#8a2cc0"/>
<path d="M175,542 L201.500,529.500 L202,533.500 L176.500,546Z" fill="#4a9e58"/>
<path d="M176.500,546 L202,533.500 L202,538 L180,549Z" fill="#7a8a9c"/>
<path d="M180,549 L202,538 L202,548 L184,552Z" fill="#9aa0a8"/>
<path d="M173,535.500 L200,523.500 L200.500,525 L174,537Z" fill="#2e2e34"/>
</g>
<circle cx="183.200" cy="523" r="3.300" fill="#2a2a2e"/><circle cx="191.600" cy="523.800" r="3.100" fill="#2a2a2e"/><circle cx="178.300" cy="530.600" r="3.300" fill="#2a2a2e"/>
<!-- 5 Photos -->
<g filter="url(#ds)"><rect x="213" y="515.400" width="31.400" height="31.600" rx="7.200" fill="#fbfbfb"/></g>
<g transform="translate(228.700 531.200)" opacity="0.860">
<ellipse cx="0" cy="-7.400" rx="4.500" ry="6.500" fill="#f6a01c"/>
<ellipse cx="0" cy="-7.400" rx="4.500" ry="6.500" fill="#f2d21c" transform="rotate(45)"/>
<ellipse cx="0" cy="-7.400" rx="4.500" ry="6.500" fill="#9acb3c" transform="rotate(90)"/>
<ellipse cx="0" cy="-7.400" rx="4.500" ry="6.500" fill="#3cb878" transform="rotate(135)"/>
<ellipse cx="0" cy="-7.400" rx="4.500" ry="6.500" fill="#3c9ee0" transform="rotate(180)"/>
<ellipse cx="0" cy="-7.400" rx="4.500" ry="6.500" fill="#6a6ad8" transform="rotate(225)"/>
<ellipse cx="0" cy="-7.400" rx="4.500" ry="6.500" fill="#b85ac8" transform="rotate(270)"/>
<ellipse cx="0" cy="-7.400" rx="4.500" ry="6.500" fill="#ee4a5a" transform="rotate(315)"/>
</g>
<!-- 6 IE -->
<defs><radialGradient id="gIE" cx="272.800" cy="536" r="17" gradientUnits="userSpaceOnUse"><stop offset="0" stop-color="#8fe2fa"/><stop offset="0.550" stop-color="#55c4f2"/><stop offset="1" stop-color="#2a8fdf"/></radialGradient></defs>
<path d="M254.500,546 C256,548.800 260,548.500 264,546.500" stroke="#e8a828" stroke-width="1.800" fill="none" stroke-linecap="round"/>
<path d="M281.500,539.300 A11.400,11.400 0 1 1 284.200,532" stroke="url(#gIE)" stroke-width="8.600" fill="none"/>
<rect x="263" y="529.800" width="25.400" height="4" fill="#5cc8f4"/>
<path d="M254.500,546 C250,538 262,521 276,514.800 C282,512.600 287,513.200 287.800,516.500 C288.300,519 287.800,521.500 287,523.500" stroke="#f6c238" stroke-width="2.100" fill="none" stroke-linecap="round"/>
<path d="M255.300,545 C252,538 263,522 276.500,516" stroke="#fbe07a" stroke-width="0.700" fill="none" stroke-linecap="round"/>
<use href="#pbars" x="280.200" y="533.400"/>
<!-- 7 green -->
<defs><linearGradient id="gGreen2" x1="0" y1="0" x2="1" y2="1"><stop offset="0" stop-color="#6fdc2c"/><stop offset="0.350" stop-color="#3cc432"/><stop offset="1" stop-color="#1c982c"/></linearGradient></defs>
<path d="M306.500,511.700 H333 V540 C333,546.500 329,550.400 322.500,550.400 H303 C297.500,550.400 294.400,546.500 294.400,541.500 V523.500 C294.400,516 299,511.700 306.500,511.700Z" fill="url(#gGreen2)"/>
<path d="M302.300,524.300 C301.300,523 301.500,521.800 302.600,520.900 L305.300,518.800 C306.400,518 307.700,518.100 308.600,519.200 L323.600,539.300 L322.800,543.300 L318.800,543.600Z" fill="#f6f6f2"/>
<path d="M302.300,524.300 C301.300,523 301.500,521.800 302.600,520.900 L305.300,518.800 C306.400,518 307.700,518.100 308.600,519.200 L312.200,524 L306,528.800Z" fill="#d2d2cc"/>
<path d="M303.300,525.700 L318.800,543.600 L317,543.200 L302.300,524.300Z" fill="#1a7a28" opacity="0.500"/>
<use href="#pbars" x="322.200" y="533.400"/>
<!-- 8 iMac windows -->
<defs><radialGradient id="gScr2" cx="0.550" cy="0.450" r="0.750"><stop offset="0" stop-color="#48a8f0"/><stop offset="0.600" stop-color="#1f74d0"/><stop offset="1" stop-color="#0e4c9c"/></radialGradient></defs>
<rect x="338" y="514.800" width="35.500" height="24" rx="1.300" fill="#1c1c20"/>
<rect x="339.300" y="516" width="32.900" height="21" fill="url(#gScr2)"/>
<path d="M338,538 H373.500 V542 A1.300,1.300 0 0 1 372.200,543.300 H339.300 A1.300,1.300 0 0 1 338,542Z" fill="#c9c9ce"/>
<path d="M351.500,543.300 H360.500 L361.800,547.300 H350.200Z" fill="#a9a9b0"/>
<rect x="347.500" y="547" width="17" height="1.300" rx="0.600" fill="#bcbcc2"/>
<path d="M350.300,523.300 L354.300,522.700 V526.700 H350.300Z M355,522.600 L359.300,522 V526.700 H355Z M350.300,527.400 H354.300 V531.400 L350.300,530.800Z M355,527.400 H359.300 V532.100 L355,531.500Z" fill="#9adcff"/>
<rect x="358.500" y="513" width="5.100" height="37" rx="2.400" fill="#d8101c"/>
<rect x="366.400" y="513" width="5.200" height="37" rx="2.400" fill="#d8101c"/>
<!-- 9 Word -->
<rect x="387.700" y="514" width="29" height="35" rx="2.500" fill="#103f91"/>
<path d="M390.200,514 H414.200 A2.500,2.500 0 0 1 416.700,516.500 V522.700 H387.700 V516.500 A2.500,2.500 0 0 1 390.200,514Z" fill="#3a96e6"/>
<rect x="387.700" y="522.700" width="29" height="8.800" fill="#2b7cd3"/>
<rect x="387.700" y="531.500" width="29" height="8.800" fill="#185abd"/>
<rect x="377.900" y="522" width="20.800" height="19" rx="2" fill="#1a56b8"/>
<text x="388.300" y="536.500" text-anchor="middle" font-family="'Liberation Sans',sans-serif" font-weight="bold" font-size="13.500" fill="#ffffff">W</text>
<use href="#pbars" x="407" y="533.400"/>
<!-- 10 pages-like -->
<g filter="url(#ds)"><rect x="424.200" y="515.400" width="31.200" height="31.600" rx="7.200" fill="#fdf9ee"/></g>
<path d="M427,526 H452 M427,530 H452 M427,534 H452 M427,538 H452 M427,542 H452" stroke="#eadfc4" stroke-width="0.600"/>
<text x="427.300" y="533.500" font-family="'Liberation Serif',serif" font-weight="bold" font-size="20" fill="#ef9427">“</text>
<path d="M447.800,518.300 L450.600,520.100 L438.600,539.300 L435.800,537.500Z" fill="#f4a62a"/>
<path d="M449.200,519.300 L450.800,520.500 L438.800,539.500 L437.200,538.300Z" fill="#d47e12"/>
<path d="M438.200,533.700 L441,535.500 L438.600,539.300 L435.800,537.500Z" fill="#2a2a2e"/><path d="M435.800,537.500 L438.600,539.300 L434.300,544.500Z" fill="#8a8a90"/>
<!-- 11 Outlook -->
<rect x="474.700" y="514.400" width="25.600" height="34.200" rx="2.200" fill="#1a86dc"/>
<path d="M476.900,514.400 H498.100 A2.200,2.200 0 0 1 500.300,516.600 V518.800 H474.700 V516.600 A2.200,2.200 0 0 1 476.900,514.400Z" fill="#0a5ec2"/>
<rect x="474.700" y="518.800" width="8.600" height="7.700" fill="#1066c8"/><rect x="483.300" y="518.800" width="8.500" height="7.700" fill="#1b84dc"/><rect x="491.800" y="518.800" width="8.500" height="7.700" fill="#38bcf2"/>
<rect x="474.700" y="526.500" width="8.600" height="6.500" fill="#0c58b4"/><rect x="483.300" y="526.500" width="8.500" height="6.500" fill="#1470cc"/><rect x="491.800" y="526.500" width="8.500" height="6.500" fill="#1f9ae8"/>
<path d="M474.700,533 H500.300 L487.500,540.500Z" fill="#0f62c0"/>
<rect x="463.400" y="522.200" width="19.600" height="18.500" rx="2" fill="#0f64c4"/>
<text x="473.200" y="536" text-anchor="middle" font-family="'Liberation Sans',sans-serif" font-weight="bold" font-size="13" fill="#ffffff">O</text>
<use href="#pbars" x="491.600" y="533.400"/>
<!-- 12 Xcode -->
<g filter="url(#ds)"><rect x="509.700" y="515.400" width="32" height="31.600" rx="7.200" fill="url(#gXc)"/></g>
<path d="M519,541.500 L528.500,522.500 M532.500,541.500 L523,522.500 M514.500,536.500 H537" stroke="#8cc4ff" stroke-width="2.900" fill="none" stroke-linecap="round" opacity="0.800"/><path d="M519,541.500 L528.500,522.500 M532.500,541.500 L523,522.500 M514.500,536.500 H537" stroke="#3f90f2" stroke-width="1.300" fill="none" stroke-linecap="round"/>
<circle cx="525.700" cy="531.200" r="12" fill="none" stroke="#6cb2fb" stroke-width="0.600" opacity="0.700"/>
<path d="M536.200,518.800 L539.600,520.800 L523.300,549 L519.900,547Z" fill="#34363d"/>
<path d="M537.400,519.500 L538.400,520.100 L522.100,548.300 L521.100,547.700Z" fill="#5a5d66"/>
<path d="M527.500,514.300 C530,512.500 534,512.300 537,513.800 L544.800,518 L543.400,522 L540.200,520.900 L538.800,523.200 L534.200,520.400 L535.200,517.900 C533,516.200 530,515.100 527.500,514.300Z" fill="#3c3e46"/>
<path d="M529,514 C531,513 534,513 536.500,514.300 L543.500,518" stroke="#7a7d86" stroke-width="0.700" fill="none"/>
<!-- 13 Paint -->
<defs><linearGradient id="gPal" x1="0" y1="0" x2="1" y2="1"><stop offset="0" stop-color="#d4e4f4"/><stop offset="1" stop-color="#8db2d8"/></linearGradient></defs>
<path d="M549.600,536 C549,527 557,520 568,519.800 C577,519.800 583,525 582.500,533 C582,541 574,540 571,542 C568.500,544 570,546.800 563,546.800 C555,546.800 550,542.500 549.600,536Z" fill="url(#gPal)" stroke="#88a4c4" stroke-width="0.500"/>
<ellipse cx="561.500" cy="534.500" rx="1.800" ry="1.300" fill="#7f9cc0"/>
<circle cx="554.800" cy="532.900" r="2.800" fill="#d8362a"/><circle cx="560.200" cy="527.100" r="2.800" fill="#3cae40"/><circle cx="568" cy="524.600" r="2.900" fill="#f2a01e"/>
<circle cx="554.200" cy="532.200" r="1" fill="#f08070"/><circle cx="559.600" cy="526.400" r="1" fill="#8ade7a"/><circle cx="567.400" cy="523.900" r="1" fill="#fbd060"/>
<path d="M577.400,520.200 L579.600,521.400 L567.200,548.600 L565.300,547.600Z" fill="#d87a22"/>
<path d="M577.400,520.200 L575.600,515.500 C578,513.200 583,513.600 585.300,516.800 L579.600,521.400Z" fill="#d9a868"/>
<path d="M576.600,518.300 L580.800,520.300 L579.600,521.400 L577.400,520.200Z" fill="#8a5a2c"/>
<use href="#pbars" x="576.200" y="533.400"/>
<!-- 14 Apple TV -->
<g filter="url(#ds)"><rect x="594.200" y="515.400" width="31" height="31.600" rx="7.200" fill="#141c19"/></g>
<g transform="translate(597.200 524.600) scale(0.500)"><path fill="#ffffff" d="M12.152 6.896c-.948 0-2.415-1.078-3.960-1.040-2.040.027-3.910 1.183-4.961 3.014-2.117 3.675-.546 9.103 1.519 12.090 1.013 1.454 2.208 3.090 3.792 3.039 1.520-.065 2.090-.987 3.935-.987 1.831 0 2.350.987 3.960.948 1.637-.026 2.676-1.480 3.676-2.948 1.156-1.688 1.636-3.325 1.662-3.415-.039-.013-3.182-1.221-3.220-4.857-.026-3.040 2.480-4.494 2.597-4.559-1.429-2.090-3.623-2.324-4.390-2.376-2-.156-3.675 1.090-4.610 1.090zM15.530 3.830c.843-1.012 1.400-2.427 1.245-3.830-1.207.052-2.662.805-3.532 1.818-.780.896-1.454 2.338-1.273 3.714 1.338.104 2.715-.688 3.559-1.701"/></g>
<text x="608.700" y="536.300" font-family="'Liberation Sans',sans-serif" font-size="15" fill="#ffffff" letter-spacing="-0.300">tv</text>
<!-- 15 App Store -->
<g filter="url(#ds)"><rect x="636.300" y="515.400" width="30.800" height="31.600" rx="7.200" fill="url(#gAS)"/></g>
<path d="M645.300,540 L653.600,522.600 M658.800,540 L650.200,522.600 M641.300,535 H662.200" stroke="#ffffff" stroke-width="2.600" fill="none" stroke-linecap="round"/>
<!-- 16 Edge -->
<defs><clipPath id="eclip"><circle cx="290" cy="275" r="232"/></clipPath>
<linearGradient id="gE1" x1="0" y1="0.300" x2="1" y2="0.500"><stop offset="0" stop-color="#2f9cf0"/><stop offset="0.450" stop-color="#34b4dc"/><stop offset="0.800" stop-color="#3fd070"/><stop offset="1" stop-color="#52e048"/></linearGradient>
<linearGradient id="gE2" x1="0" y1="0" x2="0.600" y2="1"><stop offset="0" stop-color="#2a86e2"/><stop offset="0.500" stop-color="#1c6cd4"/><stop offset="1" stop-color="#1552b4"/></linearGradient></defs>
<g transform="translate(670 508) scale(0.08547)"><g clip-path="url(#eclip)">
<rect x="40" y="30" width="500" height="500" fill="url(#gE1)"/>
<path d="M40,260 C80,175 170,140 250,165 C285,178 300,200 300,225 L240,280 L300,345 L345,340 C370,350 400,352 430,345 L560,320 L560,560 L40,560Z" fill="url(#gE2)"/>
<path d="M205,290 C175,380 250,475 380,462 C425,456 465,432 490,395 C445,420 380,420 330,398 C280,372 240,330 236,282 C222,284 210,286 205,290Z" fill="#133c94"/>
<path d="M234,285 C234,245 264,222 300,225 C336,228 354,262 346,300 C342,318 334,330 342,338 C330,342 318,340 300,338 C262,334 234,318 234,285Z" fill="#dcdbdd"/>
</g></g>
<use href="#pbars" x="704" y="533.400"/>
<!-- 17 App Store dev -->
<g filter="url(#ds)"><rect x="721" y="515.400" width="31.600" height="31.600" rx="7.200" fill="url(#gXc)"/></g>
<circle cx="736.800" cy="532.500" r="11" fill="none" stroke="#5aa8f8" stroke-width="0.600" opacity="0.600"/>
<path d="M730.500,541.300 L738.600,522.800 M743.400,541.300 L735,522.800 M726.300,536.300 H747.300" stroke="#cfe6ff" stroke-width="2.900" fill="none" stroke-linecap="round"/>
<path d="M730.500,541.300 L738.600,522.800 M743.400,541.300 L735,522.800 M726.300,536.300 H747.300" stroke="#9cc8fa" stroke-width="0.900" fill="none" stroke-linecap="round"/>
<!-- 18 GIF -->
<circle cx="779" cy="531.600" r="18.900" fill="#f4f4f6"/>
<rect x="764.800" y="521" width="28.400" height="21.500" rx="1" fill="#5b3df0"/>
<rect x="764.800" y="521" width="3.800" height="21.500" fill="#1e1a4a"/><rect x="789.400" y="521" width="3.800" height="21.500" fill="#1e1a4a"/>
<path d="M766.700,522.500 V541.500 M791.300,522.500 V541.500" stroke="#c8c4f0" stroke-width="1.600" stroke-dasharray="1.600 1.600"/>
<text x="779" y="534.800" text-anchor="middle" font-family="'Liberation Sans',sans-serif" font-weight="bold" font-size="8.400" fill="#ffffff">GIF</text>
<!-- separator -->
<rect x="809.700" y="515" width="0.800" height="35.500" fill="#a9a8ac"/>
<!-- trash -->
<path d="M826.700,517.500 C826.700,515.700 854.400,515.700 854.400,517.500 L851.300,546.500 C851,549.500 830.100,549.500 829.800,546.500Z" fill="url(#gTrash)" stroke="#c4c5c9" stroke-width="0.600"/>
<ellipse cx="840.550" cy="517.600" rx="13.600" ry="1.600" fill="#d4d5d9" stroke="#bcbdc2" stroke-width="0.500"/>
<path d="M833,521 L835,546 M840.500,521 V546.500 M848,521 L846,546" stroke="#d9dadd" stroke-width="1" opacity="0.800"/>
<!-- running dots -->
<g fill="#2a2a2e"><circle cx="59.100" cy="555.200" r="1.250"/><circle cx="144" cy="555.200" r="1.250"/><circle cx="186.500" cy="555.200" r="1.250"/><circle cx="779" cy="555.200" r="1.250"/></g>
</svg>
<!--DOCK-END-->
</div>
</body>
</html>
